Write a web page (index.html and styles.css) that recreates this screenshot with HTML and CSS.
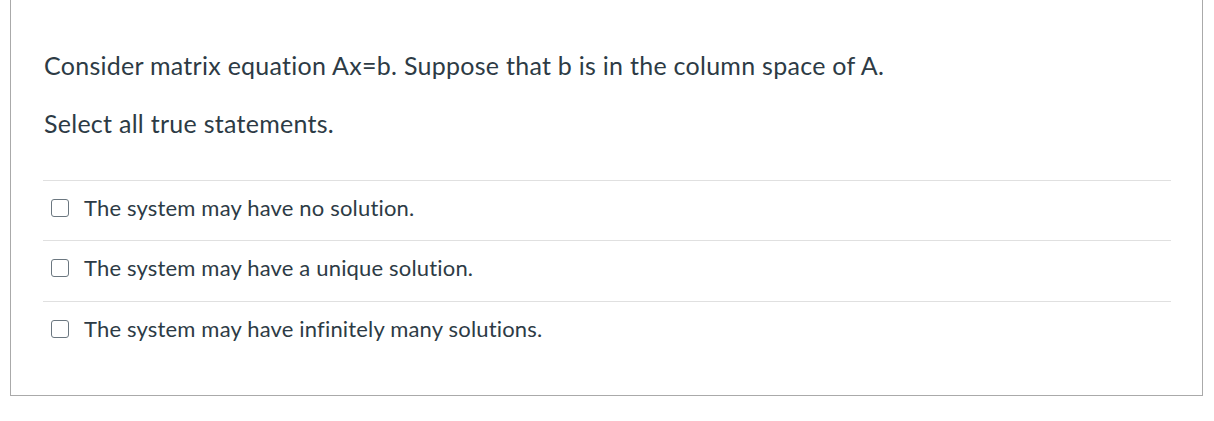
FILE: index.html
```html
<!DOCTYPE html>
<html>
<head>
<meta charset="utf-8">
<link rel="stylesheet" href="styles.css">
</head>
<body>
<div class="card">
  <div class="question">
    <p class="q-text">Consider matrix equation Ax=b. Suppose that b is in the column space of A.</p>
    <p class="q-text">Select all true statements.</p>
  </div>
  <div class="answers">
    <label class="answer"><span class="box"></span><span class="a-text">The system may have no solution.</span></label>
    <label class="answer"><span class="box"></span><span class="a-text">The system may have a unique solution.</span></label>
    <label class="answer"><span class="box"></span><span class="a-text">The system may have infinitely many solutions.</span></label>
  </div>
</div>
</body>
</html>
```
FILE: styles.css
```css
html, body {
  margin: 0;
  padding: 0;
  background: #ffffff;
}
body {
  font-family: Lato, "Open Sans", sans-serif;
  color: #2d3b45;
}
.card {
  margin: -10px 11px 0 10px;
  border: 1px solid #aaaaaa;
  padding: 59px 31px 34px 32px;
}
.question {
  padding-left: 1px;
}
.q-text {
  margin: 0 0 28px 0;
  font-size: 25px;
  letter-spacing: 0.27px;
  line-height: 30px;
}
.answers {
  margin-top: 42px;
}
.answer {
  display: flex;
  align-items: center;
  gap: 15px;
  height: 60px;
  border-top: 1px solid #e0e0e0;
  padding: 0 0 5px 8px;
  box-sizing: border-box;
}
.answer + .answer {
  height: 60.5px;
}
.box {
  width: 18px;
  height: 18px;
  border: 1.5px solid #6b7780;
  border-radius: 3px;
  box-sizing: border-box;
  flex: none;
}
.a-text {
  font-size: 22px;
  letter-spacing: 0.17px;
  line-height: 28px;
}
```
